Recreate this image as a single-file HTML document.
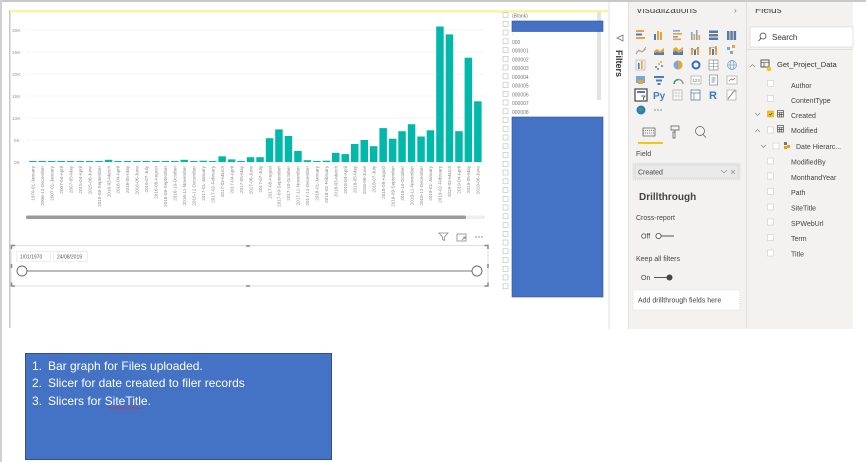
<!DOCTYPE html>
<html><head><meta charset="utf-8"><style>
html,body{margin:0;padding:0;background:#fff;width:866px;height:462px;overflow:hidden}
svg{display:block;font-family:"Liberation Sans",sans-serif}
</style></head><body>
<svg width="866" height="462" viewBox="0 0 866 462" xmlns="http://www.w3.org/2000/svg">
<rect x="0" y="0" width="866" height="462" fill="#fff"/>
<rect x="0" y="0" width="866" height="2" fill="#c8c8c8"/>
<rect x="0" y="0" width="2" height="462" fill="#d0d0d0"/>
<rect x="9" y="10" width="1.5" height="318" fill="#c8c8c8"/>
<rect x="10" y="10" width="598" height="2.5" fill="#faf3a0"/>
<!-- gridlines -->
<g stroke="#f0f0f0" stroke-width="0.8">
<line x1="26" y1="30" x2="485" y2="30"/><line x1="26" y1="52" x2="485" y2="52"/><line x1="26" y1="74" x2="485" y2="74"/><line x1="26" y1="96" x2="485" y2="96"/><line x1="26" y1="118" x2="485" y2="118"/><line x1="26" y1="140" x2="485" y2="140"/>
</g>
<g font-size="4.8" fill="#999" text-anchor="start">
<text x="12" y="32">30K</text><text x="12" y="54">25K</text><text x="12" y="76">20K</text><text x="12" y="98">15K</text><text x="12" y="120">10K</text><text x="14" y="142">5K</text><text x="14" y="164">0K</text>
</g>
<g fill="#01b8aa">
<rect x="29" y="161" width="7.5" height="1"/><rect x="38.5" y="161" width="7.5" height="1"/><rect x="47.9" y="161" width="7.5" height="1"/><rect x="57.4" y="161" width="7.5" height="1"/><rect x="66.9" y="161" width="7.5" height="1"/><rect x="76.4" y="161" width="7.5" height="1"/><rect x="85.8" y="161" width="7.5" height="1"/><rect x="95.3" y="161" width="7.5" height="1"/>
<rect x="104.8" y="159.8" width="7.5" height="2.2"/>
<rect x="114.2" y="161" width="7.5" height="1"/><rect x="123.7" y="161" width="7.5" height="1"/><rect x="133.2" y="161" width="7.5" height="1"/><rect x="142.6" y="161" width="7.5" height="1"/><rect x="152.1" y="161" width="7.5" height="1"/><rect x="161.6" y="161" width="7.5" height="1"/><rect x="171.1" y="161" width="7.5" height="1"/>
<rect x="180.5" y="159.8" width="7.5" height="2.2"/>
<rect x="190" y="161" width="7.5" height="1"/>
<rect x="199.5" y="160.7" width="7.5" height="1.3"/>
<rect x="208.9" y="161" width="7.5" height="1"/>
<rect x="218.4" y="156.3" width="7.5" height="5.7"/>
<rect x="227.9" y="159.4" width="7.5" height="2.6"/>
<rect x="237.3" y="161" width="7.5" height="1"/>
<rect x="246.8" y="157.2" width="7.5" height="4.8"/>
<rect x="256.3" y="157.2" width="7.5" height="4.8"/>
<rect x="265.8" y="138.2" width="7.5" height="23.8"/>
<rect x="275.2" y="129.4" width="7.5" height="32.6"/>
<rect x="284.7" y="136" width="7.5" height="26"/>
<rect x="294.2" y="151" width="7.5" height="11"/>
<rect x="303.6" y="160.2" width="7.5" height="1.8"/>
<rect x="313.1" y="161" width="7.5" height="1"/>
<rect x="322.6" y="160.7" width="7.5" height="1.3"/>
<rect x="332" y="152.8" width="7.5" height="9.2"/>
<rect x="341.5" y="154.1" width="7.5" height="7.9"/>
<rect x="351" y="144" width="7.5" height="18"/>
<rect x="360.5" y="140" width="7.5" height="22"/>
<rect x="369.9" y="146.2" width="7.5" height="15.8"/>
<rect x="379.4" y="128.1" width="7.5" height="33.9"/>
<rect x="388.9" y="138.7" width="7.5" height="23.3"/>
<rect x="398.3" y="131.2" width="7.5" height="30.8"/>
<rect x="407.8" y="124.2" width="7.5" height="37.8"/>
<rect x="417.3" y="136.5" width="7.5" height="25.5"/>
<rect x="426.7" y="130.3" width="7.5" height="31.7"/>
<rect x="436.2" y="26.5" width="7.5" height="135.5"/>
<rect x="445.7" y="34.4" width="7.5" height="127.6"/>
<rect x="455.2" y="131.2" width="7.5" height="30.8"/>
<rect x="464.6" y="57.7" width="7.5" height="104.3"/>
<rect x="474.1" y="101.3" width="7.5" height="60.7"/>
</g>
<g font-size="4.6" fill="#888" text-anchor="end">
<text transform="translate(34.5,166) rotate(-90)">1970-01-January</text>
<text transform="translate(44,166) rotate(-90)">2006-12-December</text>
<text transform="translate(53.4,166) rotate(-90)">2007-01-January</text>
<text transform="translate(62.9,166) rotate(-90)">2007-04-April</text>
<text transform="translate(72.4,166) rotate(-90)">2007-05-May</text>
<text transform="translate(81.9,166) rotate(-90)">2015-04-April</text>
<text transform="translate(91.3,166) rotate(-90)">2015-06-June</text>
<text transform="translate(100.8,166) rotate(-90)">2015-09-September</text>
<text transform="translate(110.3,166) rotate(-90)">2016-03-March</text>
<text transform="translate(119.7,166) rotate(-90)">2016-04-April</text>
<text transform="translate(129.2,166) rotate(-90)">2016-05-May</text>
<text transform="translate(138.7,166) rotate(-90)">2016-06-June</text>
<text transform="translate(148.1,166) rotate(-90)">2016-07-July</text>
<text transform="translate(157.6,166) rotate(-90)">2016-08-August</text>
<text transform="translate(167.1,166) rotate(-90)">2016-09-September</text>
<text transform="translate(176.6,166) rotate(-90)">2016-10-October</text>
<text transform="translate(186,166) rotate(-90)">2016-11-November</text>
<text transform="translate(195.5,166) rotate(-90)">2016-12-December</text>
<text transform="translate(205,166) rotate(-90)">2017-01-January</text>
<text transform="translate(214.4,166) rotate(-90)">2017-02-February</text>
<text transform="translate(223.9,166) rotate(-90)">2017-03-March</text>
<text transform="translate(233.4,166) rotate(-90)">2017-04-April</text>
<text transform="translate(242.8,166) rotate(-90)">2017-05-May</text>
<text transform="translate(252.3,166) rotate(-90)">2017-06-June</text>
<text transform="translate(261.8,166) rotate(-90)">2017-07-July</text>
<text transform="translate(271.3,166) rotate(-90)">2017-08-August</text>
<text transform="translate(280.7,166) rotate(-90)">2017-09-September</text>
<text transform="translate(290.2,166) rotate(-90)">2017-10-October</text>
<text transform="translate(299.7,166) rotate(-90)">2017-11-November</text>
<text transform="translate(309.1,166) rotate(-90)">2017-12-December</text>
<text transform="translate(318.6,166) rotate(-90)">2018-01-January</text>
<text transform="translate(328.1,166) rotate(-90)">2018-02-February</text>
<text transform="translate(337.5,166) rotate(-90)">2018-03-March</text>
<text transform="translate(347,166) rotate(-90)">2018-04-April</text>
<text transform="translate(356.5,166) rotate(-90)">2018-05-May</text>
<text transform="translate(366,166) rotate(-90)">2018-06-June</text>
<text transform="translate(375.4,166) rotate(-90)">2018-07-July</text>
<text transform="translate(384.9,166) rotate(-90)">2018-08-August</text>
<text transform="translate(394.4,166) rotate(-90)">2018-09-September</text>
<text transform="translate(403.8,166) rotate(-90)">2018-10-October</text>
<text transform="translate(413.3,166) rotate(-90)">2018-11-November</text>
<text transform="translate(422.8,166) rotate(-90)">2018-12-December</text>
<text transform="translate(432.2,166) rotate(-90)">2019-01-January</text>
<text transform="translate(441.7,166) rotate(-90)">2019-02-February</text>
<text transform="translate(451.2,166) rotate(-90)">2019-03-March</text>
<text transform="translate(460.7,166) rotate(-90)">2019-04-April</text>
<text transform="translate(470.1,166) rotate(-90)">2019-05-May</text>
<text transform="translate(479.6,166) rotate(-90)">2019-06-June</text>
</g>
<!-- scrollbar -->
<rect x="26" y="215.5" width="459" height="3.5" fill="#eee" rx="1.5"/>
<rect x="26" y="215.5" width="440" height="3.5" fill="#9a9a9a" rx="1.5"/>
<!-- slicer header icons -->
<g stroke="#888" stroke-width="0.8" fill="none">
<path d="M439 233 h9 l-3.5 4 v3.5 l-2 -1 v-2.5 z"/>
<rect x="457" y="234" width="9" height="7"/><path d="M462 240 l3 -3 M463 237 h2 v2"/>
</g>
<g fill="#777"><circle cx="476" cy="237" r="0.7"/><circle cx="479" cy="237" r="0.7"/><circle cx="482" cy="237" r="0.7"/></g>
<!-- slicer frame -->
<rect x="11" y="245.5" width="477" height="40.5" fill="none" stroke="#d8d8d8" stroke-width="0.8"/>
<g stroke="#888" stroke-width="1.5" fill="none">
<path d="M11.5 249 v-3.5 h3.5"/><path d="M488 249 v-3.5 h-3.5"/><path d="M11.5 282.5 v3.5 h3.5"/><path d="M488 282.5 v3.5 h-3.5"/>
<path d="M246 246 h4"/><path d="M246 286 h4"/><path d="M11.5 264 v4"/><path d="M488 264 v4"/>
</g>
<rect x="16.5" y="251.5" width="34" height="10" fill="#fff" stroke="#e4e4e4" stroke-width="0.6"/>
<rect x="53.5" y="251.5" width="34" height="10" fill="#fff" stroke="#e4e4e4" stroke-width="0.6"/>
<text x="20" y="258.5" font-size="5" fill="#555">1/01/1970</text>
<text x="57" y="258.5" font-size="5" fill="#555">24/08/2019</text>
<line x1="27" y1="271" x2="472" y2="271" stroke="#777" stroke-width="1"/>
<circle cx="22" cy="271" r="5" fill="#fff" stroke="#666" stroke-width="0.9"/>
<circle cx="477" cy="271" r="5" fill="#fff" stroke="#666" stroke-width="0.9"/>
<!-- slicer list -->
<rect x="597" y="12" width="4" height="88" fill="#e3e3e3"/>
<g fill="#fff" stroke="#bbb" stroke-width="0.6">
<rect x="503" y="12.5" width="5" height="5"/><rect x="503" y="21.3" width="5" height="5"/><rect x="503" y="30" width="5" height="5"/><rect x="503" y="38.8" width="5" height="5"/><rect x="503" y="47.5" width="5" height="5"/><rect x="503" y="56.3" width="5" height="5"/><rect x="503" y="65" width="5" height="5"/><rect x="503" y="73.8" width="5" height="5"/><rect x="503" y="82.5" width="5" height="5"/><rect x="503" y="91.3" width="5" height="5"/><rect x="503" y="100" width="5" height="5"/><rect x="503" y="108.8" width="5" height="5"/><rect x="503" y="117.5" width="5" height="5"/><rect x="503" y="126.3" width="5" height="5"/><rect x="503" y="135" width="5" height="5"/><rect x="503" y="143.8" width="5" height="5"/><rect x="503" y="152.5" width="5" height="5"/><rect x="503" y="161.3" width="5" height="5"/><rect x="503" y="170" width="5" height="5"/><rect x="503" y="178.8" width="5" height="5"/><rect x="503" y="187.5" width="5" height="5"/><rect x="503" y="196.3" width="5" height="5"/><rect x="503" y="205" width="5" height="5"/><rect x="503" y="213.8" width="5" height="5"/><rect x="503" y="222.5" width="5" height="5"/><rect x="503" y="231.3" width="5" height="5"/><rect x="503" y="240" width="5" height="5"/><rect x="503" y="248.8" width="5" height="5"/><rect x="503" y="257.5" width="5" height="5"/><rect x="503" y="266.3" width="5" height="5"/><rect x="503" y="275" width="5" height="5"/><rect x="503" y="283.8" width="5" height="5"/>
</g>
<g font-size="5" fill="#777">
<text x="512" y="17.5">(Blank)</text><text x="512" y="35">.</text><text x="512" y="44">000</text><text x="512" y="52.5">000001</text><text x="512" y="61.3">000002</text><text x="512" y="70">000003</text><text x="512" y="78.8">000004</text><text x="512" y="87.5">000005</text><text x="512" y="96.3">000006</text><text x="512" y="105">000007</text><text x="512" y="113.8">000008</text>
</g>
<rect x="512" y="21" width="91" height="10.5" fill="#4472c4" stroke="#2f528f" stroke-width="0.6"/>
<rect x="512" y="117" width="91" height="180" fill="#4472c4" stroke="#2f528f" stroke-width="0.6"/>
<!-- filters strip -->
<rect x="608.5" y="2" width="1" height="327" fill="#e1e1e1"/>
<rect x="628" y="2" width="1" height="327" fill="#e1e1e1"/>
<path d="M623 35 l-6 3 l6 3 z" fill="none" stroke="#666" stroke-width="0.7"/>
<text transform="translate(616,50) rotate(90)" font-size="9" font-weight="bold" fill="#333">Filters</text>
<!-- visualizations pane -->
<rect x="629" y="2" width="117" height="327" fill="#f3f2f1"/>
<rect x="746" y="2" width="1" height="327" fill="#e1dfdd"/>
<rect x="747" y="2" width="106" height="327" fill="#f3f2f1"/>
<rect x="747" y="49" width="106" height="1" fill="#e1dfdd"/>
<text x="636" y="13" font-size="10" fill="#444">Visualizations</text>
<text x="734" y="13" font-size="8" fill="#777">›</text>
<rect x="629" y="2" width="117" height="7" fill="#f3f2f1"/>
<text x="755" y="13" font-size="10" fill="#444">Fields</text>
<rect x="747" y="2" width="106" height="7" fill="#f3f2f1"/>
<!-- viz icons -->
<g>
<g transform="translate(636,30)"><rect x="0" y="0" width="8" height="2" fill="#e8a33c"/><rect x="0" y="3.5" width="6" height="2" fill="#4a7bbd"/><rect x="0" y="7" width="9" height="2" fill="#e8a33c"/></g>
<g transform="translate(654,30)"><rect x="0" y="4" width="2" height="6" fill="#4a7bbd"/><rect x="3" y="1" width="2" height="9" fill="#e8a33c"/><rect x="6" y="2" width="2" height="8" fill="#e8a33c"/></g>
<g transform="translate(673,30)"><rect x="0" y="0" width="7" height="1.6" fill="#7aa6d8"/><rect x="0" y="3" width="9" height="1.6" fill="#e8a33c"/><rect x="0" y="6" width="5" height="1.6" fill="#7aa6d8"/><rect x="0" y="8.5" width="8" height="1.6" fill="#e8a33c"/></g>
<g transform="translate(691,30)"><rect x="0" y="2" width="1.6" height="8" fill="#7aa6d8"/><rect x="2.5" y="4" width="1.6" height="6" fill="#e8a33c"/><rect x="5" y="0" width="1.6" height="10" fill="#7aa6d8"/><rect x="7.5" y="5" width="1.6" height="5" fill="#e8a33c"/></g>
<g transform="translate(709,30)"><rect x="0" y="0.5" width="9" height="2.5" fill="#4a7bbd"/><rect x="0" y="4" width="9" height="2.5" fill="#777"/><rect x="0" y="7.5" width="9" height="2.5" fill="#4a7bbd"/></g>
<g transform="translate(727,30)"><rect x="0" y="1" width="2.5" height="9" fill="#4a7bbd"/><rect x="3.3" y="1" width="2.5" height="9" fill="#777"/><rect x="6.6" y="1" width="2.5" height="9" fill="#4a7bbd"/></g>
<g transform="translate(636,45)" fill="none" stroke-width="0.9"><path d="M0 9 l3 -4 l3 2 l4 -5" stroke="#7aa6d8"/><path d="M0 7 l3 -1 l3 1 l4 -3" stroke="#e8a33c"/></g>
<g transform="translate(654,45)"><path d="M0 10 v-4 l3 -2 l3 2 l4 -3 v7 z" fill="#e8a33c"/><path d="M0 10 v-2 l3 -1 l3 1 l4 -1 v3 z" fill="#4a7bbd"/></g>
<g transform="translate(673,45)"><path d="M0 10 v-6 l3 -2 l3 3 l4 -3 v8 z" fill="#e8a33c"/><path d="M0 10 v-3 l3 -1 l3 2 l4 -2 v4 z" fill="#4a7bbd"/></g>
<g transform="translate(691,45)"><rect x="0" y="3" width="2" height="7" fill="#e8a33c"/><rect x="3" y="5" width="2" height="5" fill="#4a7bbd"/><rect x="6" y="2" width="2" height="8" fill="#e8a33c"/><path d="M0 3 l4 2 l4 -3" stroke="#888" stroke-width="0.6" fill="none"/></g>
<g transform="translate(709,45)"><rect x="0" y="2" width="2" height="8" fill="#e8a33c"/><rect x="3" y="4" width="2" height="6" fill="#4a7bbd"/><rect x="6" y="1" width="2" height="9" fill="#e8a33c"/><path d="M0 4 l4 -2 l4 2" stroke="#888" stroke-width="0.6" fill="none"/></g>
<g transform="translate(727,45)" fill="#7aa6d8"><rect x="0" y="2" width="3" height="3"/><rect x="5" y="0" width="3" height="3" fill="#e8a33c"/><rect x="3" y="6" width="3" height="3"/></g>
<g transform="translate(636,60)"><rect x="0" y="0" width="9" height="10" fill="none" stroke="#aaa" stroke-width="0.6"/><rect x="2" y="3" width="1.6" height="6" fill="#4a7bbd"/><rect x="5" y="1" width="1.6" height="8" fill="#e8a33c"/></g>
<g transform="translate(654,60)" fill="#4a7bbd"><circle cx="2" cy="7" r="1"/><circle cx="5" cy="4" r="1" fill="#e8a33c"/><circle cx="8" cy="6" r="1"/><circle cx="4" cy="9" r="1"/><circle cx="7" cy="2" r="1" fill="#e8a33c"/></g>
<g transform="translate(673,60)"><circle cx="5" cy="5" r="4.5" fill="#7aa6d8"/><path d="M5 5 v-4.5 a4.5 4.5 0 0 1 0 9 z" fill="#e8a33c"/></g>
<g transform="translate(691,60)"><circle cx="5" cy="5" r="3.5" fill="none" stroke="#2f6fbf" stroke-width="2"/></g>
<g transform="translate(709,60)"><rect x="0" y="0" width="9" height="10" fill="#fff" stroke="#888" stroke-width="0.7"/><path d="M0 3.5 h9 M0 6.5 h9 M4.5 0 v10" stroke="#888" stroke-width="0.6"/></g>
<g transform="translate(727,60)" fill="none" stroke="#6a9fd0" stroke-width="0.7"><circle cx="5" cy="5" r="4.5"/><ellipse cx="5" cy="5" rx="2" ry="4.5"/><path d="M0.5 5 h9"/></g>
<g transform="translate(636,75)"><rect x="0" y="1" width="9" height="7" fill="#7aa6d8"/><rect x="2" y="5" width="5" height="4" fill="#e8a33c"/></g>
<g transform="translate(654,75)" fill="#4a7bbd"><rect x="0" y="1" width="10" height="2"/><rect x="2" y="4.5" width="6" height="2"/><rect x="3.5" y="8" width="3" height="2"/></g>
<g transform="translate(673,75)" fill="none"><path d="M1 9 a4.5 4.5 0 0 1 9 0" stroke="#999" stroke-width="1.5"/><path d="M1 9 a4.5 4.5 0 0 1 4 -4.4" stroke="#2fa37a" stroke-width="1.5"/></g>
<g transform="translate(691,75)"><rect x="0" y="1" width="10" height="8" fill="#fff" stroke="#999" stroke-width="0.6"/><text x="1.2" y="7" font-size="4.5" fill="#777">123</text></g>
<g transform="translate(709,75)"><rect x="0.5" y="0" width="8" height="10" fill="#fff" stroke="#888" stroke-width="0.7"/><path d="M2.5 3 h4 M2.5 5 h4 M2.5 7 h3" stroke="#4a7bbd" stroke-width="0.7"/></g>
<g transform="translate(727,75)"><rect x="0" y="1" width="10" height="8" fill="#fff" stroke="#999" stroke-width="0.6"/><path d="M2 6 l2 -2 l2 1 l2 -2" stroke="#d04040" stroke-width="0.7" fill="none"/></g>
<g transform="translate(635,89)"><rect x="0" y="0" width="12" height="12" fill="#fff" stroke="#444" stroke-width="1.2"/><rect x="2" y="2" width="8" height="2" fill="#4a7bbd"/><path d="M6 7 h4 l-1.5 2 v2" stroke="#444" stroke-width="0.8" fill="none"/></g>
<g transform="translate(653,90)"><text x="0" y="9" font-size="10" fill="#4a7bbd" font-weight="bold">Py</text></g>
<g transform="translate(673,90)"><rect x="0" y="0" width="9" height="10" fill="#fff" stroke="#999" stroke-width="0.6"/><path d="M0 3 h9 M0 6 h9 M3 0 v10 M6 0 v10" stroke="#bbb" stroke-width="0.5"/></g>
<g transform="translate(691,90)"><rect x="0" y="0" width="9" height="10" fill="#fff" stroke="#5580b0" stroke-width="0.8"/><path d="M0 3 h9 M3 3 v7" stroke="#5580b0" stroke-width="0.7"/></g>
<g transform="translate(709,89)"><text x="0" y="10" font-size="11" fill="#3a78c4" font-weight="bold">R</text></g>
<g transform="translate(727,90)"><rect x="0" y="0" width="9" height="10" fill="#fff" stroke="#999" stroke-width="0.6"/><path d="M1 9 l3 -4 l3 -4" stroke="#666" stroke-width="0.8"/><circle cx="8" cy="1" r="1" fill="#e8a33c"/></g>
<g transform="translate(636,105)"><circle cx="5" cy="5" r="4.5" fill="#2a7cc4"/><path d="M2 4 q3 -3 5 1 q-2 3 -4 0z" fill="#3aa35a"/></g>
<g fill="#777"><circle cx="655" cy="110" r="0.7"/><circle cx="658" cy="110" r="0.7"/><circle cx="661" cy="110" r="0.7"/></g>
</g>
<!-- tabs -->
<g fill="none" stroke="#555" stroke-width="0.7">
<rect x="643" y="128" width="12" height="8"/><path d="M643 130.5 h12 M643 133 h12" stroke-dasharray="1 1"/>
<path d="M671 126 h8 v4 h-8 z M675 130 v2 h-2 v6 h2 v-6"/>
<circle cx="700" cy="131" r="4.5"/><path d="M703 134.5 l3 3"/>
</g>
<rect x="638" y="142" width="25" height="2" fill="#f2c811"/>
<text x="636" y="156" font-size="7" fill="#444">Field</text>
<rect x="633" y="163" width="107" height="17" fill="#eaeaea" stroke="#c8c8c8" stroke-width="0.6" stroke-dasharray="1 1"/>
<rect x="635" y="165" width="103" height="13" fill="#eaeaea" stroke="#ccc" stroke-width="0.5"/>
<text x="638" y="174.5" font-size="7" fill="#444">Created</text>
<path d="M721 170 l3 3 l3 -3" stroke="#888" stroke-width="0.6" fill="none"/>
<path d="M731 170 l4 4 M735 170 l-4 4" stroke="#888" stroke-width="0.6"/>
<text x="639" y="200" font-size="10" font-weight="bold" fill="#444">Drillthrough</text>
<text x="636" y="220" font-size="7" fill="#444">Cross-report</text>
<text x="641" y="238.5" font-size="7" fill="#444">Off</text>
<circle cx="658.5" cy="236" r="2.6" fill="#fff" stroke="#444" stroke-width="0.8"/>
<line x1="661" y1="236" x2="674" y2="236" stroke="#444" stroke-width="0.9"/>
<text x="636" y="261" font-size="7" fill="#444">Keep all filters</text>
<text x="641" y="280" font-size="7" fill="#444">On</text>
<line x1="654" y1="277.5" x2="668" y2="277.5" stroke="#444" stroke-width="0.9"/>
<circle cx="669.5" cy="277.5" r="3" fill="#444"/>
<rect x="633" y="290" width="107" height="20" fill="#fff" stroke="#c8c8c8" stroke-width="0.6" stroke-dasharray="1 1"/>
<text x="638" y="302.5" font-size="7" fill="#444">Add drillthrough fields here</text>
<!-- fields -->
<rect x="750" y="27" width="103" height="20" fill="#fff" stroke="#d0d0d0" stroke-width="0.6"/>
<circle cx="763" cy="36" r="3" fill="none" stroke="#444" stroke-width="0.8"/><line x1="761" y1="38.3" x2="758.5" y2="41" stroke="#444" stroke-width="0.8"/>
<text x="772" y="40" font-size="8" fill="#333">Search</text>
<path d="M750 67 l2.5 -2.5 l2.5 2.5" stroke="#777" stroke-width="0.6" fill="none"/>
<rect x="761" y="60" width="8" height="7" fill="none" stroke="#333" stroke-width="0.8"/><path d="M761 62.5 h8 M764 62.5 v4.5" stroke="#333" stroke-width="0.6"/>
<circle cx="769" cy="69" r="2.3" fill="#f2c811"/>
<text x="777" y="67" font-size="7.5" fill="#333">Get_Project_Data</text>
<g fill="#fff" stroke="#ccc" stroke-width="0.6">
<rect x="767.5" y="80.5" width="6" height="6"/><rect x="767.5" y="95.5" width="6" height="6"/>
<rect x="767.5" y="158" width="6" height="6"/><rect x="767.5" y="173" width="6" height="6"/><rect x="767.5" y="188.5" width="6" height="6"/><rect x="767.5" y="204" width="6" height="6"/><rect x="767.5" y="219" width="6" height="6"/><rect x="767.5" y="234.5" width="6" height="6"/><rect x="767.5" y="250" width="6" height="6"/>
<rect x="767.5" y="127" width="6" height="6"/><rect x="773" y="143" width="6" height="6"/>
</g>
<rect x="767.5" y="111" width="6" height="6" fill="#f2c811" stroke="#c9a400" stroke-width="0.5"/>
<path d="M769 114 l1.2 1.2 l2 -2.2" stroke="#333" stroke-width="0.6" fill="none"/>
<g font-size="7" fill="#444">
<text x="791" y="88">Author</text><text x="791" y="103">ContentType</text><text x="791" y="118">Created</text><text x="791" y="133">Modified</text><text x="796" y="149">Date Hierarc...</text>
<text x="791" y="164.5">ModifiedBy</text><text x="791" y="180">MonthandYear</text><text x="791" y="195">Path</text><text x="791" y="210.5">SiteTitle</text><text x="791" y="226">SPWebUrl</text><text x="791" y="241">Term</text><text x="791" y="256.5">Title</text>
</g>
<g stroke="#777" stroke-width="0.6" fill="none">
<path d="M755 113 l2.5 2.5 l2.5 -2.5"/><path d="M755 132 l2.5 -2.5 l2.5 2.5"/><path d="M761 145 l2.5 2.5 l2.5 -2.5"/>
</g>
<g fill="none" stroke="#333" stroke-width="0.6">
<rect x="777.5" y="110.5" width="6" height="6.5"/><path d="M777.5 112.5 h6 M779.5 112.5 v4.5 M781.5 112.5 v4.5 M777.5 114.7 h6"/>
<rect x="777.5" y="125.5" width="6" height="6.5"/><path d="M777.5 127.5 h6 M779.5 127.5 v4.5 M781.5 127.5 v4.5 M777.5 129.7 h6"/>
</g>
<rect x="784" y="142" width="3" height="3" fill="#777"/><rect x="787" y="145" width="3" height="3" fill="#e0a020"/><rect x="784" y="146" width="3" height="3" fill="#e0a020"/>
<!-- notes box -->
<rect x="25.5" y="353.5" width="306" height="106" fill="#4472c4" stroke="#2f528f" stroke-width="1"/>
<g font-size="12" fill="#fff" font-family="Liberation Sans, sans-serif">
<text x="32" y="370">1.</text><text x="48" y="370">Bar graph for Files uploaded.</text>
<text x="32" y="387">2.</text><text x="48" y="387">Slicer for date created to filer records</text>
<text x="32" y="405">3.</text><text x="48" y="405">Slicers for SiteTitle.</text>
</g>
<path d="M109 408 q1 -1.2 2 0 t2 0 t2 0 t2 0 t2 0 t2 0 t2 0 t2 0 t2 0 t2 0 t2 0 t2 0 t2 0 t2 0 t2 0 t2 0" stroke="#e03030" stroke-width="0.7" fill="none"/>
</svg>
</body></html>
